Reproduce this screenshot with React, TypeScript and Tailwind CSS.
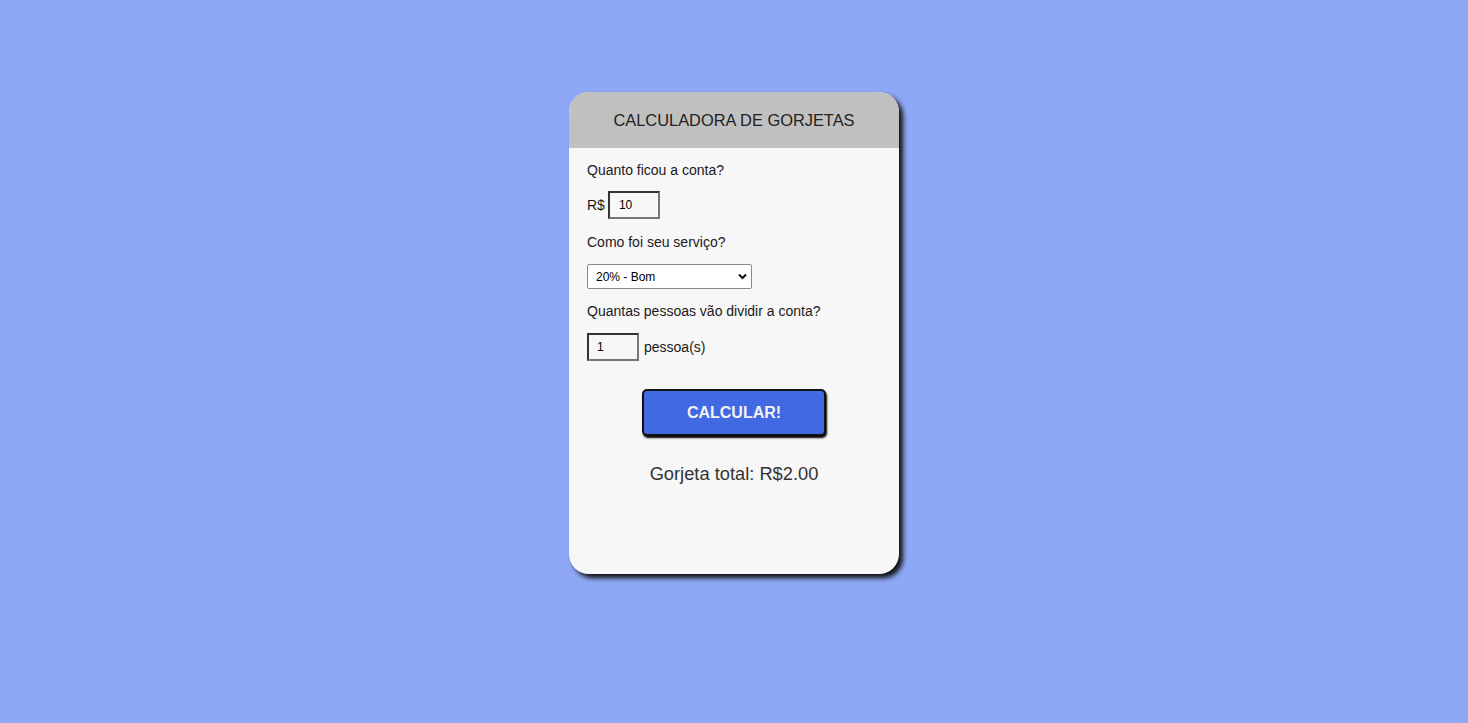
import { useState } from "react";

const App = () => {
  const [bill, setBill] = useState("10");
  const [service, setService] = useState("0.2");
  const [people, setPeople] = useState("1");
  const [tip, setTip] = useState("2.00");

  const calcular = () => {
    const total = (parseFloat(bill) * parseFloat(service)) / (parseInt(people) || 1);
    setTip(isNaN(total) ? "0.00" : total.toFixed(2));
  };

  return (
    <div className="min-h-screen w-full bg-[#8ea8f6] flex justify-center pt-[92px] font-['Liberation_Sans',Arial,sans-serif]">
      <div className="w-[330px] h-[482px] bg-[#f7f7f7] rounded-[20px] overflow-hidden shadow-[4px_4px_5px_#111]">
        <div className="h-[56px] bg-[#c0c0c0] flex items-center justify-center text-[16.4px] text-[#222]">
          CALCULADORA DE GORJETAS
        </div>
        <div className="px-[18px] text-[14px] text-[#1a1a1a]">
          <p className="mt-[14px] leading-[16px]">Quanto ficou a conta?</p>
          <div className="mt-[13px] flex items-center gap-[3px]">
            <span>R$</span>
            <input
              value={bill}
              onChange={e => setBill(e.target.value)}
              className="w-[52px] h-[28px] bg-transparent px-[9px] text-[12px] text-black border-2 border-t-[#333] border-l-[#333] border-b-[#777] border-r-[#777] outline-none"
            />
          </div>
          <p className="mt-[15px] leading-[16px]">Como foi seu serviço?</p>
          <div className="mt-[14px] relative w-[165px]">
            <select
              value={service}
              onChange={e => setService(e.target.value)}
              className="appearance-none w-[165px] h-[25px] bg-white border border-[#8a8a8a] rounded-[2px] pl-[8px] text-[12px] text-black outline-none"
            >
              <option value="0.3">30% - Muito bom</option>
              <option value="0.2">20% - Bom</option>
              <option value="0.15">15% - Razoável</option>
              <option value="0.1">10% - Ruim</option>
              <option value="0.05">5% - Péssimo</option>
            </select>
            <svg
              className="pointer-events-none absolute right-[5px] top-[9px] w-[9px] h-[7px]"
              viewBox="0 0 9 7"
              fill="none"
              stroke="#111"
              strokeWidth="2"
            >
              <path d="M1 1.5l3.5 3.5L8 1.5" />
            </svg>
          </div>
          <p className="mt-[14px] leading-[16px]">Quantas pessoas vão dividir a conta?</p>
          <div className="mt-[14px] flex items-center gap-[5px]">
            <input
              value={people}
              onChange={e => setPeople(e.target.value)}
              className="w-[52px] h-[28px] bg-transparent px-[8px] text-[12px] text-black border-2 border-t-[#333] border-l-[#333] border-b-[#777] border-r-[#777] outline-none"
            />
            <span>pessoa(s)</span>
          </div>
          <div className="mt-[28px] flex justify-center">
            <button
              onClick={calcular}
              className="w-[184px] h-[47px] bg-[#4169e1] border-2 border-[#111] rounded-[5px] shadow-[1px_2px_2px_#000] text-[16px] font-bold text-[#f2f2f2]"
            >
              CALCULAR!
            </button>
          </div>
          <p className="mt-[27px] text-center text-[18.3px] leading-[21px] text-[#333]">Gorjeta total: R${tip}</p>
        </div>
      </div>
    </div>
  );
};

export default App;
